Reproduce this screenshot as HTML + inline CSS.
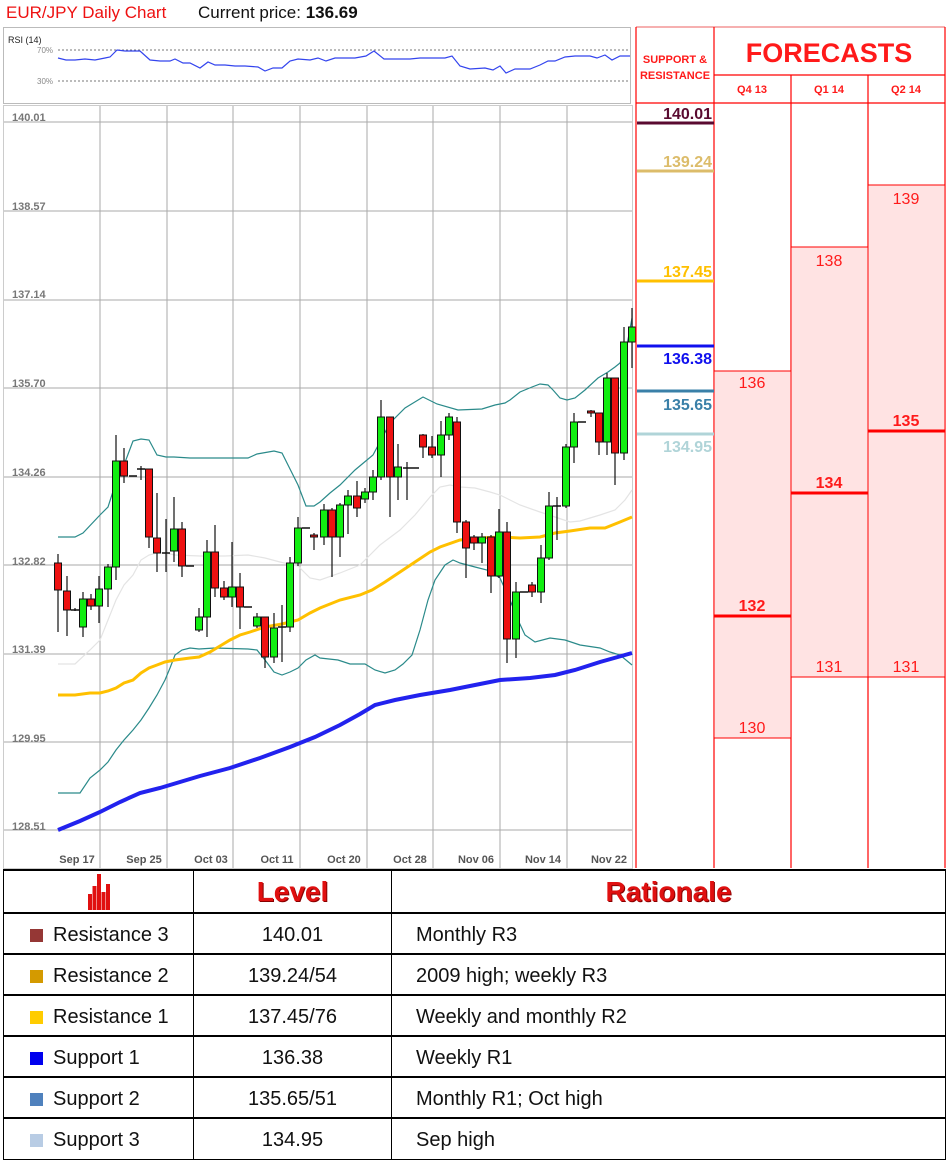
<!DOCTYPE html>
<html><head><meta charset="utf-8"><style>
body{margin:0;width:951px;height:1162px;background:#fff;overflow:hidden;font-family:"Liberation Sans",sans-serif;position:relative}
svg{position:absolute;left:0;top:0}
table{position:absolute;left:3px;top:869px;width:943px;border-collapse:collapse;font-family:"Liberation Sans Narrow","Liberation Sans",sans-serif;font-size:20px;color:#111}
td{border:1px solid #000;border-top:2px solid #000;height:41px;padding:4px 0 0 0;box-sizing:border-box}
tr:first-child td{height:43px;padding-top:0}
.c1{width:190px;padding-left:26px}
.c2{width:198px;text-align:center}
.c3{padding-left:24px}
.h{color:#e01010;font-family:"Liberation Sans",sans-serif;font-weight:900;font-size:28px;text-align:center;text-shadow:1px 1px 0 #800}
.sq{display:inline-block;width:13px;height:13px;margin-right:10px;vertical-align:-1px}
</style></head><body>
<svg id="s" width="951" height="1162" viewBox="0 0 951 1162" font-family="Liberation Sans, sans-serif">
<text x="6" y="18" fill="#ee1111" font-size="17">EUR/JPY Daily Chart</text>
<text x="198" y="18" fill="#111" font-size="17">Current price: <tspan font-weight="bold">136.69</tspan></text>
<rect x="3.5" y="27.5" width="627" height="76" fill="#fff" stroke="#bbb"/>
<text x="8" y="43" font-size="9" fill="#222">RSI (14)</text>
<text x="37" y="53" font-size="8" fill="#888">70%</text>
<text x="37" y="84" font-size="8" fill="#888">30%</text>
<line x1="58" y1="50" x2="630" y2="50" stroke="#777" stroke-dasharray="2,2"/>
<line x1="58" y1="81" x2="630" y2="81" stroke="#777" stroke-dasharray="2,2"/>
<polyline fill="none" stroke="#3344ee" stroke-width="1.2" points="58,58 66,60 75,60 85,59 95,60 105,58 110,57 117,50 125,51 140,51 150,60 160,61 170,61 175,59 183,63 190,63 200,68 208,62 215,65 225,65 235,66 245,66 258,67 265,71 273,68 282,68 290,61 298,59 310,60 318,58 326,61 335,58 345,58 355,58 366,56 374,51 384,59 395,59 410,59 420,58 445,58 452,56 460,66 470,69 485,68 493,70 500,66 506,73 515,69 530,69 540,65 548,61 555,61 565,57 575,56 590,56 597,58 605,55 612,60 620,56 630,56"/>
<rect x="3.5" y="105.5" width="629" height="763" fill="#fff" stroke="#ccc"/>
<g id="grid" stroke="#aaa" stroke-width="1"></g>
<g font-size="11" fill="#777" font-weight="bold">
<text x="12" y="121">140.01</text><text x="12" y="210">138.57</text><text x="12" y="298">137.14</text><text x="12" y="387">135.70</text><text x="12" y="476">134.26</text><text x="12" y="565">132.82</text><text x="12" y="653">131.39</text><text x="12" y="742">129.95</text><text x="12" y="830">128.51</text>
</g>
<g font-size="11" fill="#555" font-weight="bold" text-anchor="middle">
<text x="77" y="863">Sep 17</text><text x="144" y="863">Sep 25</text><text x="211" y="863">Oct 03</text><text x="277" y="863">Oct 11</text><text x="344" y="863">Oct 20</text><text x="410" y="863">Oct 28</text><text x="476" y="863">Nov 06</text><text x="543" y="863">Nov 14</text><text x="609" y="863">Nov 22</text>
</g>
<polyline fill="none" stroke="#e4e4e4" stroke-width="1.2" points="58,664 75,664 90,650 100,640 108,620 116,600 124,585 133,575 141,560 149,555 157,553 165,553 175,555 200,556 225,556 248,555 265,558 280,562 298,566 310,578 320,580 340,573 360,565 380,545 400,530 415,515 430,497 440,487 450,485 460,487 475,488 490,492 500,495 520,505 540,512 555,517 570,522 580,521 590,518 600,515 615,510 625,500 632,490"/>
<polyline fill="none" stroke="#2a8a8a" stroke-width="1.2" points="58,537 75,537 83,533 100,515 108,507 116,482 124,465 133,441 141,439 149,440 157,455 166,457 174,457 190,458 215,458 232,458 248,458 257,454 274,451 282,453 298,485 306,506 314,506 320,502 330,493 340,485 355,470 373,455 390,423 405,408 423,397 437,404 458,410 482,409 495,405 505,403 510,400 520,392 532,387 540,384 548,385 553,390 560,398 567,400 575,398 585,390 598,378 608,372 615,367 620,363 627,345 632,318"/>
<polyline fill="none" stroke="#2a8a8a" stroke-width="1.2" points="58,793 80,793 90,778 100,770 108,762 116,750 124,740 133,730 141,720 149,708 157,695 165,680 170,668 175,655 182,650 190,648 199,649 215,648 248,649 257,650 265,660 274,672 282,675 290,672 298,668 306,660 315,655 320,658 338,660 350,664 365,664 375,670 385,673 395,670 403,664 412,655 420,630 428,600 435,580 445,565 453,560 460,563 475,567 487,570 500,578 510,600 518,620 525,635 535,642 550,638 565,640 580,645 600,648 610,652 620,655 632,665"/>
<polyline fill="none" stroke="#ffc000" stroke-width="3" points="58,695 75,695 90,693 100,693 108,691 116,688 124,683 133,680 141,673 149,668 157,665 165,662 175,660 190,658 199,657 210,652 220,646 230,640 240,635 250,632 265,627 282,624 298,620 310,613 320,608 340,600 360,595 372,590 385,582 400,572 415,562 430,552 440,547 460,540 480,538 500,537 520,538 540,537 555,533 570,531 590,528 605,528 620,522 632,517"/>
<polyline fill="none" stroke="#2222ee" stroke-width="4" points="58,830 80,821 100,812 120,802 140,793 160,788 180,782 200,776 230,768 260,758 290,747 315,737 340,725 360,714 375,705 395,700 420,695 450,690 475,685 500,680 530,678 555,675 575,670 600,662 632,653"/>
<g id="cd"></g>
<g stroke="#ff0000" stroke-width="1.2" fill="none">
<line x1="636" y1="27" x2="945" y2="27" stroke="#f08080"/>
<line x1="636" y1="27" x2="636" y2="868"/>
<line x1="714" y1="27" x2="714" y2="868"/>
<line x1="945" y1="27" x2="945" y2="868"/>
<line x1="714" y1="75" x2="945" y2="75"/>
<line x1="636" y1="103" x2="945" y2="103"/>
<line x1="791" y1="75" x2="791" y2="868"/>
<line x1="868" y1="75" x2="868" y2="868"/>
</g>
<g stroke="#ff0000" stroke-width="1">
<rect x="714" y="371" width="77" height="367" fill="#ffe3e3"/>
<rect x="791" y="247" width="77" height="430" fill="#ffe3e3"/>
<rect x="868" y="185" width="77" height="492" fill="#ffe3e3"/>
</g>
<g stroke="#ff0000" stroke-width="3">
<line x1="714" y1="616" x2="791" y2="616"/><line x1="791" y1="493" x2="868" y2="493"/><line x1="868" y1="431" x2="945" y2="431"/>
</g>
<g fill="#ff1a1a" font-size="16" text-anchor="middle">
<text x="752" y="388">136</text><text x="752" y="733">130</text>
<text x="829" y="266">138</text><text x="829" y="672">131</text>
<text x="906" y="204">139</text><text x="906" y="672">131</text>
<text x="752" y="611" font-weight="bold">132</text><text x="829" y="488" font-weight="bold">134</text><text x="906" y="426" font-weight="bold">135</text>
</g>
<text x="829" y="62" fill="#ff1a1a" font-size="27" font-weight="bold" text-anchor="middle">FORECASTS</text>
<g fill="#ff1a1a" font-size="11" font-weight="bold" text-anchor="middle">
<text x="675" y="63">SUPPORT &amp;</text><text x="675" y="79">RESISTANCE</text>
<text x="752" y="93">Q4 13</text><text x="829" y="93">Q1 14</text><text x="906" y="93">Q2 14</text>
</g>
<g stroke-width="3">
<line x1="637" y1="123" x2="714" y2="123" stroke="#5a0a30"/>
<line x1="637" y1="171" x2="714" y2="171" stroke="#dcbc6a"/>
<line x1="637" y1="281" x2="714" y2="281" stroke="#ffc000"/>
<line x1="637" y1="346" x2="714" y2="346" stroke="#1010ee"/>
<line x1="637" y1="391" x2="714" y2="391" stroke="#3a80a8"/>
<line x1="637" y1="434" x2="714" y2="434" stroke="#b0d4d8"/>
</g>
<g font-size="16" font-weight="bold" text-anchor="end">
<text x="712" y="119" fill="#5a0a30">140.01</text>
<text x="712" y="167" fill="#dcbc6a">139.24</text>
<text x="712" y="277" fill="#ffc000">137.45</text>
<text x="712" y="364" fill="#1010ee">136.38</text>
<text x="712" y="410" fill="#3a80a8">135.65</text>
<text x="712" y="452" fill="#b0d4d8">134.95</text>
</g>
</svg>
<table>
<tr><td class="c1" style="padding-left:0;text-align:center"><svg style="position:static;vertical-align:middle" width="22" height="36" viewBox="0 0 22 36"><g fill="#e01010"><rect x="0" y="20" width="4" height="16"/><rect x="4.5" y="12" width="4" height="24"/><rect x="9" y="0" width="4" height="36"/><rect x="13.5" y="18" width="4" height="18"/><rect x="18" y="10" width="4" height="26"/></g></svg></td><td class="c2 h">Level</td><td class="h">Rationale</td></tr>
<tr><td class="c1"><span class="sq" style="background:#953735"></span>Resistance 3</td><td class="c2">140.01</td><td class="c3">Monthly R3</td></tr>
<tr><td class="c1"><span class="sq" style="background:#d49a00"></span>Resistance 2</td><td class="c2">139.24/54</td><td class="c3">2009 high; weekly R3</td></tr>
<tr><td class="c1"><span class="sq" style="background:#ffcc00"></span>Resistance 1</td><td class="c2">137.45/76</td><td class="c3">Weekly and monthly R2</td></tr>
<tr><td class="c1"><span class="sq" style="background:#0000ee"></span>Support 1</td><td class="c2">136.38</td><td class="c3">Weekly R1</td></tr>
<tr><td class="c1"><span class="sq" style="background:#4f81bd"></span>Support 2</td><td class="c2">135.65/51</td><td class="c3">Monthly R1; Oct high</td></tr>
<tr><td class="c1"><span class="sq" style="background:#b8cce4"></span>Support 3</td><td class="c2">134.95</td><td class="c3">Sep high</td></tr>
</table>
<script>
var NS="http://www.w3.org/2000/svg",g=document.getElementById('grid');
function el(t,a,p){var e=document.createElementNS(NS,t);for(var k in a)e.setAttribute(k,a[k]);p.appendChild(e);return e}
[122,211,300,388,477,565,654,742,830].forEach(function(y){el('line',{x1:4,y1:y,x2:632,y2:y},g)});
[100,167,233,300,367,433,500,567].forEach(function(x){el('line',{x1:x,y1:106,x2:x,y2:868},g)});
var C=[[58,563,590,554,632],[67,591,610,576,636],[75,610,610,608,611],[83,627,599,592,637],[91,599,606,594,610],[99,606,589,576,623],[108,589,567,564,607],[116,567,461,435,580],[124,461,476,448,483],[133,476,476,476,476],[141,469,469,466,480],[149,469,537,469,548],[157,538,553,493,572],[166,553,552,519,572],[174,551,529,497,562],[182,529,566,522,577],[190,566,566,566,566],[199,630,617,608,632],[207,617,552,540,637],[215,552,588,525,597],[224,588,597,581,600],[232,597,587,542,607],[240,587,607,573,629],[248,607,607,607,607],[257,626,617,613,628],[265,617,657,617,668],[274,657,628,613,663],[282,627,627,605,662],[290,627,563,557,632],[298,563,528,517,566],[306,528,528,528,528],[314,535,537,533,550],
[324,537,510,504,545],[332,510,537,508,577],[340,537,505,503,557],[348,505,496,490,534],[357,496,508,481,517],[365,499,492,488,503],[373,492,477,470,500],[381,477,417,400,480],[390,417,477,417,517],[398,477,467,444,500],[407,468,468,462,500],[415,468,468,468,468],[423,435,447,434,458],[432,447,455,436,458],[441,455,435,421,477],[449,435,417,413,440],[457,422,522,417,533],[466,522,548,520,578],[474,537,543,535,550],[482,543,537,533,563],[491,537,576,535,593],[499,576,532,509,578],[507,532,639,522,663],[516,639,592,582,658],[524,592,592,592,592],[532,585,592,582,597],[541,592,558,545,603],[549,558,506,492,560],[557,506,506,497,540],[566,506,447,444,508],[574,447,422,413,463],[582,422,422,422,422],[591,411,413,410,417],[599,413,442,413,455],[607,442,378,373,455],[615,378,453,378,485],[624,453,342,327,460],[632,342,327,308,368]];
var cd=document.getElementById('cd');
C.forEach(function(c){var x=c[0],o=c[1],cl=c[2];
el('line',{x1:x,y1:c[3],x2:x,y2:c[4],stroke:'#111','stroke-width':1.2},cd);
var t=Math.min(o,cl),h=Math.abs(o-cl);
if(h<1.5){el('line',{x1:x-4,y1:o,x2:x+4,y2:o,stroke:'#111','stroke-width':1.5},cd)}
else el('rect',{x:x-3.5,y:t,width:7,height:h,fill:cl<o?'#11ee11':'#ee1111',stroke:'#111','stroke-width':1},cd)});
</script>
</body></html>
